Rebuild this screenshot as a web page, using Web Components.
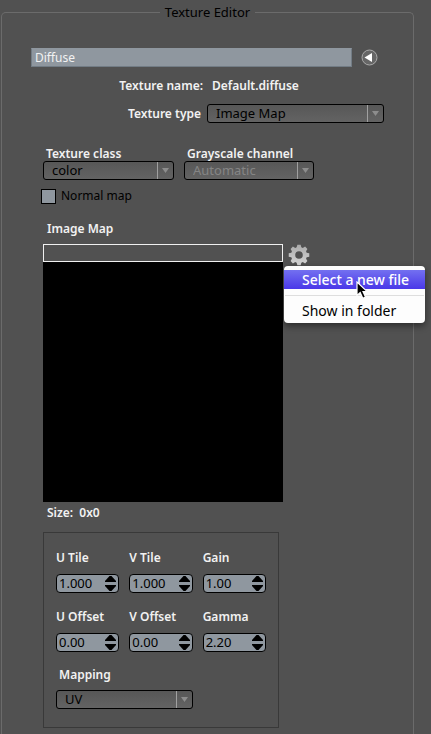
<!DOCTYPE html>
<html lang="en">
<head>
<meta charset="utf-8">
<meta name="viewport" content="width=device-width, initial-scale=1">
<title>Texture Editor</title>
<style>
  html { height: 100%; background: #515151; overflow: hidden; }
  body { margin: 0; min-height: 100%; display: flex; color: #f2f2f2; font: 12px/16px "Noto Sans", "Open Sans", sans-serif; }
</style>
</head>
<body>
<texture-editor></texture-editor>
<script>
const define = (name, html, setup) => {
  const template = document.createElement('template');
  template.innerHTML = '<style>*{box-sizing:border-box}</style>' + html;
  customElements.define(name, class extends HTMLElement {
    constructor() {
      super();
      this.attachShadow({ mode: 'open' }).append(template.content.cloneNode(true));
    }
    connectedCallback() { if (setup) setup(this, this.shadowRoot); }
  });
};

define('field-label', `
  <style>:host{display:block;font-weight:600;white-space:nowrap}</style>
  <slot></slot>`);

define('drop-down', `
  <style>
    :host{display:block;position:relative;height:19px;min-width:0}
    select{appearance:none;display:block;width:100%;height:19px;margin:0;padding:0 20px 0 8px;border:1px solid #000;border-radius:3px;
      background:linear-gradient(#575757,#636363);color:#000;font:13px/17px "Noto Sans",sans-serif;opacity:1}
    select:disabled{color:#858585}
    .arrow{position:absolute;right:1px;top:1px;width:16px;height:17px;border-left:1px solid #a0a0a0;pointer-events:none}
    svg{display:block;margin:6px 0 0 4px}
  </style>
  <select></select>
  <span class="arrow"><svg width="7" height="5"><path d="M0 0H7L3.5 5Z" fill="#8d8d8d"/></svg></span>`,
  (host, root) => {
    const select = root.querySelector('select');
    select.replaceChildren(new Option(host.getAttribute('value')));
    select.setAttribute('aria-label', host.getAttribute('label'));
    select.disabled = host.hasAttribute('disabled');
  });

define('number-field', `
  <style>
    :host{display:block;min-width:0}
    label{display:block;font-weight:600;white-space:nowrap;margin-bottom:8px}
    .box{display:flex;height:19px;border:1px solid #000;border-radius:4px;background:#8f979f;overflow:hidden}
    input{appearance:textfield;flex:1;width:0;min-width:0;border:0;margin:0;padding:0 0 0 2px;background:none;color:#000;font:13px/17px "Noto Sans",sans-serif;outline:0}
    input::-webkit-inner-spin-button{display:none}
    .steps{display:flex;flex-direction:column;justify-content:center;gap:3px;width:13px}
    button{display:block;border:0;padding:0;background:none;height:6px}
    svg{display:block}
  </style>
  <label for="n"></label>
  <div class="box"><input id="n" type="number">
    <span class="steps">
      <button aria-label="Increase"><svg width="11" height="6"><path d="M0 6V5L4.5 0H6.5L11 5V6Z"/></svg></button>
      <button aria-label="Decrease"><svg width="11" height="6"><path d="M0 0V1L4.5 6H6.5L11 1V0Z"/></svg></button>
    </span></div>`,
  (host, root) => {
    const input = root.querySelector('input');
    root.querySelector('label').textContent = host.getAttribute('label');
    input.step = host.getAttribute('step');
    input.value = host.getAttribute('value');
    const [up, down] = root.querySelectorAll('button');
    const move = sign => {
      const step = host.getAttribute('step');
      input.value = (Number(input.value) + sign * Number(step)).toFixed(step.split('.')[1].length);
    };
    up.onclick = () => move(1);
    down.onclick = () => move(-1);
  });

define('check-box', `
  <style>
    :host{display:block}
    label{display:flex;align-items:center;gap:5px;height:16px;color:#000;font-size:12px}
    input{appearance:none;width:15px;height:15px;margin:0;border:1px solid #000;background:#8f979f}
    input:checked{background:#30363c}
  </style>
  <label><input type="checkbox"><slot></slot></label>`);

define('file-menu', `
  <style>
    :host{display:block;width:141px;padding:4px 0 3px;border-radius:4px;background:#fdfdfd;box-shadow:0 3px 7px #0007;color:#000}
    button{display:block;width:100%;height:19px;margin:0;padding:0 0 0 18px;border:0;background:none;text-align:left;color:#000;font:14px/19px "Noto Sans",sans-serif;white-space:nowrap}
    .active{background:linear-gradient(#7370f0,#4a38e8);color:#fff;font-weight:500}
    hr{height:1px;margin:6px 1px 5px;border:0;background:#dedede}
    svg{position:absolute;left:72px;top:15px}
  </style>
  <div role="menu">
    <button role="menuitem" class="active">Select a new file</button>
    <hr>
    <button role="menuitem">Show in folder</button>
  </div>
  <svg width="14" height="19" viewBox="0 0 14 19"><path d="M1 1V14.5L4.2 11.6L6.8 17.3L9.5 16L7 10.6H11.2Z" fill="#000" stroke="#fff" stroke-width="1.2"/></svg>`);

define('image-picker', `
  <style>
    :host{display:block}
    label{display:block;margin:0 0 7px 4px;font-weight:600}
    .row{display:flex;align-items:center;gap:5px;height:18px}
    input{flex:1;min-width:0;height:18px;margin:0;padding:0 4px;border:1px solid #f0f0f0;background:#515151;color:#fff;font:12px/16px "Noto Sans",sans-serif}
    .anchor{position:relative;width:22px;height:22px;margin-top:3px}
    .gear{display:block;width:22px;height:22px;padding:0;border:0;background:none}
    file-menu{position:absolute;left:-4px;top:22px}
    .preview{height:240px;margin-right:27px;background:#000}
    .size{margin:3px 0 0 4px}
    .size span{margin-left:3px}
  </style>
  <label for="path">Image Map</label>
  <div class="row">
    <input id="path" type="text">
    <div class="anchor">
      <button class="gear" aria-label="File options"><svg width="22" height="22" viewBox="-11 -11 22 22">
        <defs><linearGradient id="g" x1="0" y1="0" x2="0" y2="1"><stop offset="0" stop-color="#aaa"/><stop offset="1" stop-color="#d6d6d6"/></linearGradient></defs>
        <path id="cog" fill="url(#g)" fill-rule="evenodd"/></svg></button>
      <file-menu></file-menu>
    </div>
  </div>
  <div class="preview" role="img" aria-label="Preview"></div>
  <field-label class="size">Size: <span>0x0</span></field-label>`,
  (host, root) => {
    const points = [];
    for (let i = 0; i < 8; i++) {
      for (const [offset, r] of [[-17, 8], [-9, 10.4], [9, 10.4], [17, 8]]) {
        const a = (i * 45 + offset) * Math.PI / 180;
        points.push((r * Math.sin(a)).toFixed(2) + ' ' + (-r * Math.cos(a)).toFixed(2));
      }
    }
    root.querySelector('#cog').setAttribute('d', 'M' + points.join('L') + 'ZM3.8 0A3.8 3.8 0 1 0 -3.8 0A3.8 3.8 0 1 0 3.8 0Z');
  });

define('tile-settings', `
  <style>
    :host{display:block;padding:17px 12px 18px;border:1px solid #393939}
    .grid{display:grid;grid-template-columns:repeat(3,1fr);gap:16px 10px}
    .mapping{margin:15px 0 7px 3px}
    .wide{grid-column:span 2}
  </style>
  <div class="grid">
    <number-field label="U Tile" value="1.000" step="0.001"></number-field>
    <number-field label="V Tile" value="1.000" step="0.001"></number-field>
    <number-field label="Gain" value="1.00" step="0.01"></number-field>
    <number-field label="U Offset" value="0.00" step="0.01"></number-field>
    <number-field label="V Offset" value="0.00" step="0.01"></number-field>
    <number-field label="Gamma" value="2.20" step="0.01"></number-field>
  </div>
  <field-label class="mapping">Mapping</field-label>
  <div class="grid"><drop-down class="wide" label="Mapping" value="UV"></drop-down></div>`);

define('texture-editor', `
  <style>
    :host{display:flex;flex:1;min-width:0;padding:4px 17px 0 1px}
    fieldset{flex:1;min-width:0;margin:0;padding:27px 29px 24px;border:1px solid #6b6b6b;border-bottom:0;border-radius:5px 5px 0 0}
    legend{margin:0 auto;padding:0 5px;color:#000;font-size:13px}
    .channel{display:flex;align-items:center;gap:9px;height:20px;margin-right:6px}
    .channel input{flex:1;min-width:0;height:19px;margin:0;padding:0 3px;border:1px solid #727c85;border-top-color:#8f979f;background:#8f979f;color:#f2f2f2;font:12px/16px "Noto Sans",sans-serif}
    .back{width:17px;height:17px;padding:0;border:0;background:none}
    .back svg{display:block}
    .pair{display:grid;grid-template-columns:172px 1fr;gap:9px}
    .pair>:first-child{text-align:right}
    .name{margin:11px 0 10px}
    .type{grid-template-columns:170px 1fr;gap:6px;align-items:center}
    .classes{display:grid;grid-template-columns:131fr 130fr;gap:0 10px;margin:24px 70px 8px 12px}
    .classes field-label{margin-left:3px;line-height:14px}
    check-box{margin:0 0 17px 10px}
    image-picker{margin:0 74px 11px 12px}
    tile-settings{margin:0 105px 0 12px}
  </style>
  <fieldset>
    <legend>Texture Editor</legend>
    <div class="channel">
      <input type="text" value="Diffuse" aria-label="Channel">
      <button class="back" aria-label="Back"><svg width="17" height="17"><circle cx="8.5" cy="8.5" r="7.5" fill="#666" stroke="#aaa"/><path d="M3.5 8.5L11 4V13Z" fill="#fff"/></svg></button>
    </div>
    <div class="pair name"><field-label>Texture name:</field-label><field-label>Default.diffuse</field-label></div>
    <div class="pair type"><field-label>Texture type</field-label><drop-down label="Texture type" value="Image Map"></drop-down></div>
    <div class="classes">
      <field-label>Texture class</field-label><field-label>Grayscale channel</field-label>
      <drop-down label="Texture class" value="color"></drop-down>
      <drop-down label="Grayscale channel" value="Automatic" disabled></drop-down>
    </div>
    <check-box>Normal map</check-box>
    <image-picker></image-picker>
    <tile-settings></tile-settings>
  </fieldset>`);
</script>
</body>
</html>
